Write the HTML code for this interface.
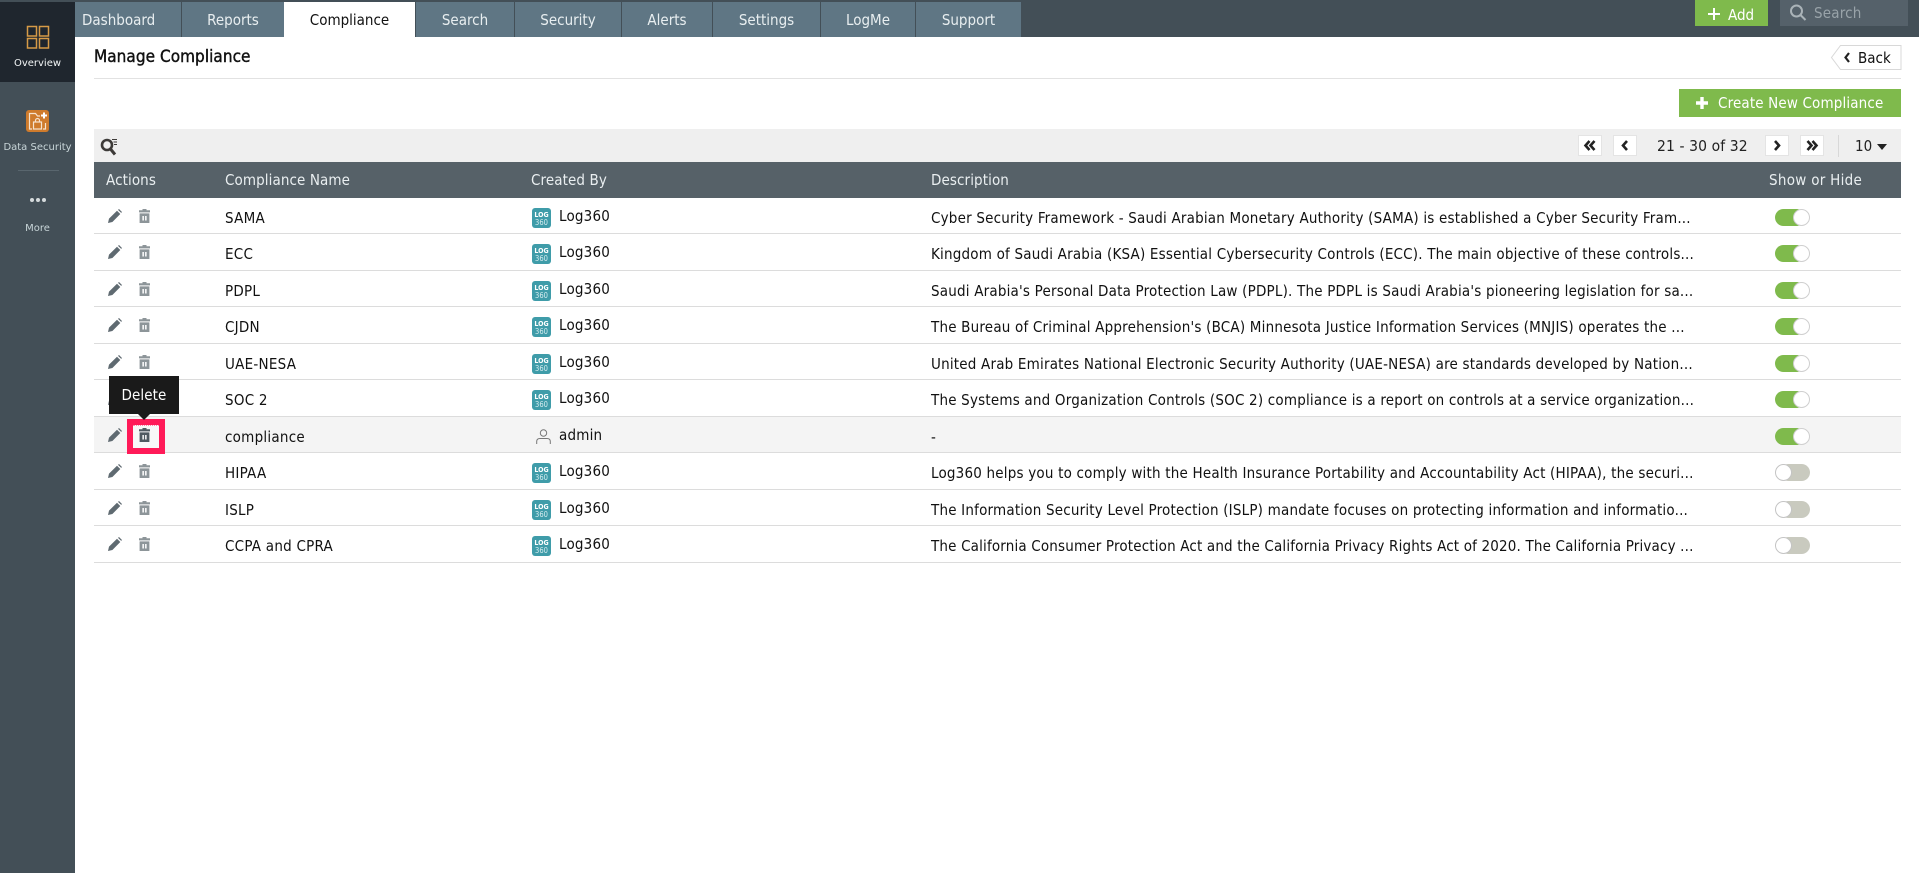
<!DOCTYPE html>
<html><head><meta charset="utf-8"><title>Manage Compliance</title>
<style>
*{box-sizing:border-box}
html,body{margin:0;padding:0;width:1919px;height:873px;overflow:hidden;background:#fff}
body{position:relative;font-family:"DejaVu Sans Condensed","DejaVu Sans",sans-serif;font-stretch:condensed;font-size:15px;letter-spacing:.2px;color:#111}
.a{position:absolute;white-space:nowrap}
#top{position:absolute;left:0;top:0;width:1919px;height:37px;background:#434f57}
#side{position:absolute;left:0;top:0;width:75px;height:873px;background:#434f57}
#ov{position:absolute;left:0;top:2px;width:75px;height:80px;background:#1f262e}
.sl{position:absolute;left:0;width:75px;text-align:center;font-family:"DejaVu Sans",sans-serif;font-stretch:normal;font-size:10px;letter-spacing:0;line-height:12px;color:#dfe6e8}
.t{position:absolute;top:2px;height:35px;background:#5f7684;color:#e8eef0;font-size:15px;letter-spacing:0;line-height:36px;text-align:center}
.t.on{background:#fff;color:#111}
.th{position:absolute;top:171px;line-height:18px;color:#e9eef0;font-size:15px;letter-spacing:.1px;white-space:nowrap}
.r{position:absolute;left:94px;width:1807px;border-bottom:1px solid #dcdcdc}
.r>*{position:absolute}
.p{left:14px;top:11px;width:14px;height:14px;fill:#5f6a71}
.d{left:45px;top:11px;width:11px;height:14px;fill:#8d9599}
.n{left:131px;top:11px;line-height:18px;letter-spacing:.25px;white-space:nowrap}
.l{left:438px;top:10px;width:19px;height:20px}
.c{left:465px;top:9px;line-height:18px;white-space:nowrap}
.de{left:837px;top:11px;line-height:18px;white-space:nowrap}
.s{left:1681px;top:11px;width:35px;height:17px}
.pg{position:absolute;top:135px;width:24px;height:21px;background:#fff;border:1px solid #e4e4e4}
.pg svg{position:absolute;left:0;top:0;width:22px;height:19px;fill:none;stroke:#222;stroke-width:2.6}
</style></head><body>
<svg width="0" height="0" style="position:absolute">
<defs>
<symbol id="pen" viewBox="0 0 14 14"><path d="M0 14L1 9.6 9 1.8 12.3 5 4.4 13ZM10 .9 11 0 14 3 13.2 3.9Z"/></symbol>
<symbol id="tr" viewBox="0 0 11 14"><path fill-rule="evenodd" d="M3.5 0H7.5V1.3H11V3.4H0V1.3H3.5ZM.6 4.4H10.4V14H.6ZM3.4 7V11.5H4.9V7ZM6.1 7V11.5H7.6V7Z"/></symbol>
<symbol id="on" viewBox="0 0 35 17"><rect x="0" y="0" width="30" height="17" rx="8.5" fill="#7fba4c"/><circle cx="26.5" cy="8.5" r="8" fill="#fff" stroke="#cfcfcf"/></symbol>
<symbol id="off" viewBox="0 0 35 17"><rect x="5" y="0" width="30" height="17" rx="8.5" fill="#c9cabf"/><circle cx="8.5" cy="8.5" r="8" fill="#fff" stroke="#c4c4c4"/></symbol>
<symbol id="lg" viewBox="0 0 19 20"><rect width="19" height="20" rx="3" fill="#3f9ca9"/><text x="9.5" y="9" text-anchor="middle" font-family="DejaVu Sans" font-weight="700" font-size="7" letter-spacing="0" fill="#fff">LOG</text><text x="9.5" y="17" text-anchor="middle" font-family="DejaVu Sans" font-size="7.5" letter-spacing="0" fill="#d5ecef">360</text></symbol>
</defs></svg>

<div id="top"></div>
<div id="side"></div>
<div id="ov"></div>
<svg class="a" style="left:26px;top:25px" width="24" height="24" fill="none" stroke="#d69a47" stroke-width="1.5"><rect x="1.5" y="1.5" width="9" height="9.5"/><rect x="13.5" y="1.5" width="9" height="9.5"/><rect x="1.5" y="13.5" width="9" height="9.5"/><rect x="13.5" y="13.5" width="9" height="9.5"/></svg>
<div class="sl" style="top:58px;color:#f2f5f6">Overview</div>
<svg class="a" style="left:26px;top:110px" width="23" height="22"><rect width="23" height="22" rx="3" fill="#cf7b2c"/><path d="M6 19H3.5V3.5H9.5L11.5 6H14M17 19H19.5V13" fill="none" stroke="#f6e3cf" stroke-width="1.2"/><path d="M15 5.5H21M18 2.5V8.5" stroke="#fff" stroke-width="2"/><rect x="7.5" y="12" width="8" height="7" fill="none" stroke="#f6e3cf" stroke-width="1.2"/><path d="M9.5 12V10.5A2 2 0 0 1 13.5 10.5V12" fill="none" stroke="#f6e3cf" stroke-width="1.2"/></svg>
<div class="sl" style="top:142px;color:#c8d5d8">Data Security</div>
<div class="a" style="left:18px;top:170px;width:41px;height:1px;background:#59666e"></div>
<svg class="a" style="left:29px;top:197px" width="18" height="6" fill="#d5dadc"><circle cx="3" cy="3" r="2"/><circle cx="9" cy="3" r="2"/><circle cx="15" cy="3" r="2"/></svg>
<div class="sl" style="top:223px;color:#c8d5d8">More</div>

<div class="t" style="left:75px;width:106px;text-align:left;padding-left:7px">Dashboard</div>
<div class="t" style="left:182px;width:102px">Reports</div>
<div class="t on" style="left:284px;width:131px">Compliance</div>
<div class="t" style="left:416px;width:98px">Search</div>
<div class="t" style="left:515px;width:106px">Security</div>
<div class="t" style="left:622px;width:90px">Alerts</div>
<div class="t" style="left:713px;width:107px">Settings</div>
<div class="t" style="left:821px;width:94px">LogMe</div>
<div class="t" style="left:916px;width:105px">Support</div>

<div class="a" style="left:1695px;top:0;width:73px;height:26px;background:#7fba4c"></div>
<svg class="a" style="left:1708px;top:8px" width="12" height="12"><path d="M6 0V12M0 6H12" stroke="#fff" stroke-width="2"/></svg>
<div class="a" style="left:1728px;top:6px;line-height:18px;font-size:15px;letter-spacing:0;color:#fff">Add</div>
<div class="a" style="left:1780px;top:0;width:128px;height:26px;background:#55616a"></div>
<svg class="a" style="left:1789px;top:4px" width="18" height="17" fill="none" stroke="#aab3b8" stroke-width="2"><circle cx="7.5" cy="7" r="5.5"/><path d="M11.5 11L16.5 16"/></svg>
<div class="a" style="left:1814px;top:4px;line-height:18px;font-size:15px;color:#99a3a9">Search</div>

<div class="a" style="left:94px;top:47px;line-height:20px;font-size:17px;letter-spacing:.05px;color:#111;-webkit-text-stroke:.4px #111">Manage Compliance</div>
<div class="a" style="left:94px;top:78px;width:1807px;height:1px;background:#e2e2e2"></div>
<svg class="a" style="left:1830px;top:44px" width="72" height="27"><path d="M1.5 13.5L10.5 1.5H71V25.5H10.5Z" fill="#fff" stroke="#d8d8d8"/><path d="M19 9L15.5 13.5L19 18" fill="none" stroke="#222" stroke-width="2.2"/></svg>
<div class="a" style="left:1858px;top:49px;line-height:18px;font-size:15px;letter-spacing:0;color:#111">Back</div>

<div class="a" style="left:1679px;top:89px;width:222px;height:28px;background:#7fba4c"></div>
<svg class="a" style="left:1696px;top:97px" width="12" height="12"><path d="M6 0V12M0 6H12" stroke="#fff" stroke-width="3.4"/></svg>
<div class="a" style="left:1718px;top:94px;line-height:18px;font-size:15px;letter-spacing:.15px;color:#fff">Create New Compliance</div>

<div class="a" style="left:94px;top:129px;width:1807px;height:33px;background:#efefef"></div>
<svg class="a" style="left:100px;top:137px" width="18" height="19" fill="none" stroke="#3d3a38"><circle cx="7" cy="8" r="5" stroke-width="2.6"/><path d="M10.5 12L15 17.5" stroke-width="3"/><path d="M12 2.5H17M13.5 5H17M14 7.5H17" stroke-width="1"/></svg>
<div class="pg" style="left:1578px"><svg viewBox="0 0 22 19"><path d="M10.5 5L6.5 9.5L10.5 14M15.5 5L11.5 9.5L15.5 14"/></svg></div>
<div class="pg" style="left:1613px"><svg viewBox="0 0 22 19"><path d="M13 5L9 9.5L13 14"/></svg></div>
<div class="a" style="left:1657px;top:136px;line-height:20px;font-size:15.5px;letter-spacing:.1px;color:#222">21 - 30 of 32</div>
<div class="pg" style="left:1765px"><svg viewBox="0 0 22 19"><path d="M9 5L13 9.5L9 14"/></svg></div>
<div class="pg" style="left:1800px"><svg viewBox="0 0 22 19"><path d="M6.5 5L10.5 9.5L6.5 14M11.5 5L15.5 9.5L11.5 14"/></svg></div>
<div class="a" style="left:1838px;top:135px;width:1px;height:22px;background:#d8d8d8"></div>
<div class="a" style="left:1855px;top:136px;line-height:20px;font-size:15px;letter-spacing:0;color:#222">10</div>
<svg class="a" style="left:1877px;top:144px" width="10" height="6"><path d="M0 0H10L5 6Z" fill="#222"/></svg>

<div class="a" style="left:94px;top:162px;width:1807px;height:36px;background:#566168"></div>
<div class="th" style="left:106px">Actions</div>
<div class="th" style="left:225px">Compliance Name</div>
<div class="th" style="left:531px">Created By</div>
<div class="th" style="left:931px">Description</div>
<div class="th" style="left:1769px;letter-spacing:.3px">Show or Hide</div>

<div class="r" style="top:198px;height:36px"><svg class="p"><use href="#pen"/></svg><svg class="d"><use href="#tr"/></svg><span class="n">SAMA</span><svg class="l"><use href="#lg"/></svg><span class="c">Log360</span><span class="de">Cyber Security Framework - Saudi Arabian Monetary Authority (SAMA) is established a Cyber Security Fram...</span><svg class="s"><use href="#on"/></svg></div>
<div class="r" style="top:234px;height:37px"><svg class="p"><use href="#pen"/></svg><svg class="d"><use href="#tr"/></svg><span class="n">ECC</span><svg class="l"><use href="#lg"/></svg><span class="c">Log360</span><span class="de">Kingdom of Saudi Arabia (KSA) Essential Cybersecurity Controls (ECC). The main objective of these controls...</span><svg class="s"><use href="#on"/></svg></div>
<div class="r" style="top:271px;height:36px"><svg class="p"><use href="#pen"/></svg><svg class="d"><use href="#tr"/></svg><span class="n">PDPL</span><svg class="l"><use href="#lg"/></svg><span class="c">Log360</span><span class="de">Saudi Arabia's Personal Data Protection Law (PDPL). The PDPL is Saudi Arabia's pioneering legislation for sa...</span><svg class="s"><use href="#on"/></svg></div>
<div class="r" style="top:307px;height:37px"><svg class="p"><use href="#pen"/></svg><svg class="d"><use href="#tr"/></svg><span class="n">CJDN</span><svg class="l"><use href="#lg"/></svg><span class="c">Log360</span><span class="de">The Bureau of Criminal Apprehension's (BCA) Minnesota Justice Information Services (MNJIS) operates the ...</span><svg class="s"><use href="#on"/></svg></div>
<div class="r" style="top:344px;height:36px"><svg class="p"><use href="#pen"/></svg><svg class="d"><use href="#tr"/></svg><span class="n">UAE-NESA</span><svg class="l"><use href="#lg"/></svg><span class="c">Log360</span><span class="de">United Arab Emirates National Electronic Security Authority (UAE-NESA) are standards developed by Nation...</span><svg class="s"><use href="#on"/></svg></div>
<div class="r" style="top:380px;height:37px"><svg class="p"><use href="#pen"/></svg><svg class="d"><use href="#tr"/></svg><span class="n">SOC 2</span><svg class="l"><use href="#lg"/></svg><span class="c">Log360</span><span class="de">The Systems and Organization Controls (SOC 2) compliance is a report on controls at a service organization...</span><svg class="s"><use href="#on"/></svg></div>
<div class="r" style="top:417px;height:36px;background:#f4f4f4"><svg class="p"><use href="#pen"/></svg><span class="n">compliance</span><svg style="left:442px;top:12px;width:15px;height:15px" fill="none" stroke="#777"><circle cx="7.5" cy="4" r="3.2"/><path d="M.7 15V12.5Q.7 9.5 4 9.5H11Q14.3 9.5 14.3 12.5V15"/></svg><span class="c">admin</span><span class="de">-</span><svg class="s"><use href="#on"/></svg></div>
<div class="r" style="top:453px;height:37px"><svg class="p"><use href="#pen"/></svg><svg class="d"><use href="#tr"/></svg><span class="n">HIPAA</span><svg class="l"><use href="#lg"/></svg><span class="c">Log360</span><span class="de">Log360 helps you to comply with the Health Insurance Portability and Accountability Act (HIPAA), the securi...</span><svg class="s"><use href="#off"/></svg></div>
<div class="r" style="top:490px;height:36px"><svg class="p"><use href="#pen"/></svg><svg class="d"><use href="#tr"/></svg><span class="n">ISLP</span><svg class="l"><use href="#lg"/></svg><span class="c">Log360</span><span class="de">The Information Security Level Protection (ISLP) mandate focuses on protecting information and informatio...</span><svg class="s"><use href="#off"/></svg></div>
<div class="r" style="top:526px;height:37px"><svg class="p"><use href="#pen"/></svg><svg class="d"><use href="#tr"/></svg><span class="n">CCPA and CPRA</span><svg class="l"><use href="#lg"/></svg><span class="c">Log360</span><span class="de" style="letter-spacing:.17px">The California Consumer Protection Act and the California Privacy Rights Act of 2020. The California Privacy ...</span><svg class="s"><use href="#off"/></svg></div>

<div class="a" style="left:127px;top:419px;width:38px;height:35px;border:6px solid #ff1a58;background:#f8f8f8"></div>
<div class="a" style="left:133px;top:425px;width:26px;height:1px;border-top:1px dotted #ff8aa8"></div>
<svg class="a" style="left:139px;top:428px;width:11px;height:14px;fill:#4f5a61"><use href="#tr"/></svg>
<div class="a" style="left:109px;top:376px;width:70px;height:38px;background:#1a1a1a;color:#fff;text-align:center;line-height:38px;font-size:15px;letter-spacing:.1px">Delete</div>
<svg class="a" style="left:138px;top:414px" width="12" height="6"><path d="M0 0H12L6 6Z" fill="#1a1a1a"/></svg>
</body></html>
